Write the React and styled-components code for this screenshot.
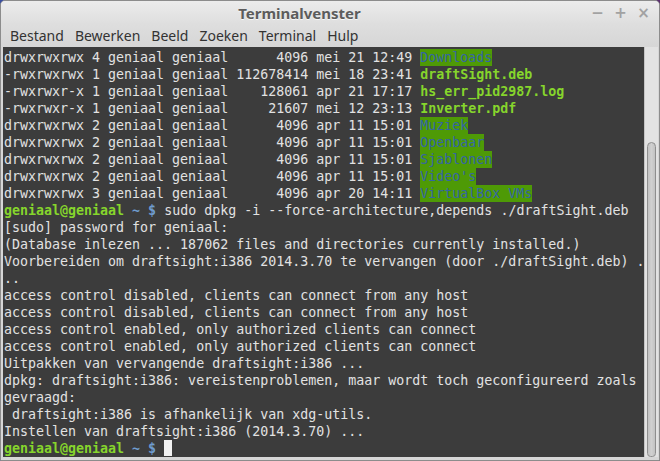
import React from 'react';
import styled, {createGlobalStyle} from 'styled-components';

const GlobalStyle = createGlobalStyle`
    html, body {
        margin: 0;
        padding: 0;
        background: linear-gradient(90deg, #3a4fa0, #5b2f6e);
    }
`

const Window = styled.div`
    width: 660px;
    height: 461px;
    box-sizing: border-box;
    display: flex;
    flex-direction: column;
    border: 1px solid #8c8c8c;
    border-radius: 5px 5px 0 0;
    background: #d6d6d6;
    overflow: hidden;
`

const TitleBar = styled.div`
    height: 23px;
    display: flex;
    align-items: center;
    background: linear-gradient(#ececec, #dedede);
`

const Title = styled.div`
    flex: 1;
    text-align: center;
    padding-left: 8px;
    padding-top: 1px;
    font: bold 15px "Noto Sans", "DejaVu Sans", sans-serif;
    color: #5c5c5c;
    text-shadow: 0 1px 0 #f6f6f6;
`

const Controls = styled.div`
    display: flex;
    gap: 8px;
    padding-right: 8px;
    color: #a2a2a2;
`

const WinButton = styled.span`
    width: 15px;
    text-align: center;
    font: bold 15px "DejaVu Sans", sans-serif;
`

const MenuBar = styled.div`
    height: 23px;
    display: flex;
    align-items: center;
    padding-left: 3px;
    background: linear-gradient(#dedede, #d6d6d6);
`

const MenuItem = styled.span`
    padding: 0 6px;
    margin-right: -1px;
    font: 14px "Noto Sans", "DejaVu Sans", sans-serif;
    color: #333;
`

const Body = styled.div`
    flex: 1;
    display: flex;
    padding: 0 1px 3px 2px;
    min-height: 0;
`

const Terminal = styled.div`
    flex: 1;
    background: #3c3c3c;
    padding: 2px 0 0 1px;
    font-family: "DejaVu Sans Mono", monospace;
    font-size: 13.3px;
    color: #e2e2e2;
    overflow: hidden;
`

const Line = styled.div`
    height: 17px;
    line-height: 17px;
    white-space: pre;
`

const Dir = styled.span`
    display: inline-block;
    height: 17px;
    background: #4e9a06;
    color: #3465a4;
`

const Exec = styled.span`
    font-weight: bold;
    color: #86d52c;
`

const User = styled.span`
    font-weight: bold;
    color: #86d52c;
`

const Path = styled.span`
    font-weight: bold;
    color: #6f9ccf;
`

const Cursor = styled.span`
    display: inline-block;
    width: 8px;
    height: 16px;
    vertical-align: top;
    background: #f2f2f2;
`

const Scrollbar = styled.div`
    width: 13px;
    display: flex;
    flex-direction: column;
    justify-content: flex-end;
    background: #e2e2e2;
    border-left: 1px solid #c4c4c4;
`

const Thumb = styled.div`
    height: 313px;
    margin: 0 2px 0 2px;
    border: 1px solid #8e8e8e;
    border-radius: 5px 5px 4px 4px;
    background: linear-gradient(90deg, #c2c2c2, #d0d0d0, #c2c2c2);
`

const listing = [
    ['drwxrwxrwx 4 geniaal geniaal      4096 mei 21 12:49 ', 'Downloads', 'dir'],
    ['-rwxrwxrwx 1 geniaal geniaal 112678414 mei 18 23:41 ', 'draftSight.deb', 'exec'],
    ['-rwxrwxr-x 1 geniaal geniaal    128061 apr 21 17:17 ', 'hs_err_pid2987.log', 'exec'],
    ['-rwxrwxr-x 1 geniaal geniaal     21607 mei 12 23:13 ', 'Inverter.pdf', 'exec'],
    ['drwxrwxrwx 2 geniaal geniaal      4096 apr 11 15:01 ', 'Muziek', 'dir'],
    ['drwxrwxrwx 2 geniaal geniaal      4096 apr 11 15:01 ', 'Openbaar', 'dir'],
    ['drwxrwxrwx 2 geniaal geniaal      4096 apr 11 15:01 ', 'Sjablonen', 'dir'],
    ['drwxrwxrwx 2 geniaal geniaal      4096 apr 11 15:01 ', "Video's", 'dir'],
    ['drwxrwxrwx 3 geniaal geniaal      4096 apr 20 14:11 ', 'VirtualBox VMs', 'dir'],
];

const output = [
    '[sudo] password for geniaal:',
    '(Database inlezen ... 187062 files and directories currently installed.)',
    'Voorbereiden om draftsight:i386 2014.3.70 te vervangen (door ./draftSight.deb) .',
    '..',
    'access control disabled, clients can connect from any host',
    'access control disabled, clients can connect from any host',
    'access control enabled, only authorized clients can connect',
    'access control enabled, only authorized clients can connect',
    'Uitpakken van vervangende draftsight:i386 ...',
    'dpkg: draftsight:i386: vereistenproblemen, maar wordt toch geconfigureerd zoals',
    'gevraagd:',
    ' draftsight:i386 is afhankelijk van xdg-utils.',
    'Instellen van draftsight:i386 (2014.3.70) ...',
];

const menus = ['Bestand', 'Bewerken', 'Beeld', 'Zoeken', 'Terminal', 'Hulp'];

function Prompt({children}){
    return (
        <Line>
            <User>geniaal@geniaal</User> <Path>~ $</Path> {children}
        </Line>
    )
}

function App(){
    return (
        <>
            <GlobalStyle/>
            <Window>
                <TitleBar>
                    <Title>Terminalvenster</Title>
                    <Controls>
                        <WinButton>−</WinButton>
                        <WinButton>+</WinButton>
                        <WinButton>×</WinButton>
                    </Controls>
                </TitleBar>
                <MenuBar>
                    {menus.map(m => <MenuItem key={m}>{m}</MenuItem>)}
                </MenuBar>
                <Body>
                    <Terminal>
                        {listing.map(([meta, name, kind]) =>
                        <Line key={name}>
                            {meta}{kind === 'dir' ? <Dir>{name}</Dir> : <Exec>{name}</Exec>}
                        </Line>)}
                        <Prompt>sudo dpkg -i --force-architecture,depends ./draftSight.deb</Prompt>
                        {output.map((text, i) => <Line key={i}>{text}</Line>)}
                        <Prompt><Cursor/></Prompt>
                    </Terminal>
                    <Scrollbar>
                        <Thumb/>
                    </Scrollbar>
                </Body>
            </Window>
        </>
    )
}

export default App;
